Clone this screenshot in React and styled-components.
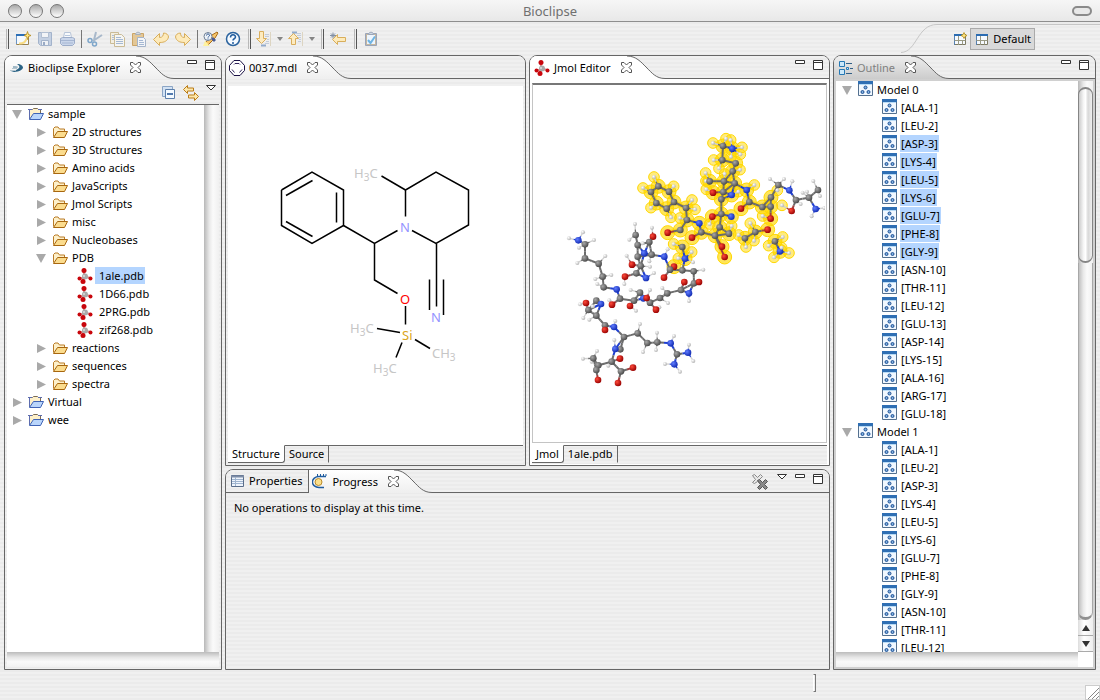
import React from "react";
import styled, { createGlobalStyle } from "styled-components";

const LINE = "#666";
const stripes =
  "repeating-linear-gradient(to bottom, #f0f0f0 0, #f0f0f0 2px, #ebebeb 2px, #ebebeb 4px)";

const Global = createGlobalStyle`
  *, *::before, *::after { box-sizing: border-box; }
  body { margin: 0; background: #ececec; }
  body, button { font-family: "Noto Sans", "Open Sans", sans-serif; font-size: 11px; line-height: 16px; color: #000; }
  button { margin: 0; padding: 0; border: 0; background: none; text-align: left; white-space: nowrap; }
  ul { list-style: none; margin: 0; padding: 0; }
  svg { display: block; flex: none; }
`;

const Window = styled.div`
  display: flex;
  flex-direction: column;
  height: 100vh;
  min-height: 480px;
  background: ${stripes};
`;

const TitleBar = styled.header`
  display: grid;
  grid-template-columns: 1fr auto 1fr;
  align-items: center;
  flex: none;
  height: 22px;
  padding: 0 8px;
  border-bottom: 1px solid #8e8e8e;
  background: linear-gradient(#f6f6f6, #e8e8e8);
`;

const Title = styled.h1`
  margin: 0;
  font-size: 13px;
  line-height: 20px;
  font-weight: 400;
  color: #707070;
`;

const Lights = styled.div`
  display: flex;
  gap: 7px;
`;

const Light = styled.button`
  width: 14px;
  height: 14px;
  border: 1px solid #777;
  border-radius: 7px;
  background: linear-gradient(#a8a8a8, #d0d0d0 45%, #fff);
`;

const Pill = styled.button`
  justify-self: end;
  width: 20px;
  height: 10px;
  border: 2px solid #8a8a8a;
  border-radius: 5px;
  background: #e8e8e8;
`;

const ToolRow = styled.div`
  display: flex;
  align-items: center;
  flex: none;
  height: 33px;
  padding-left: 6px;
`;

const ToolGroup = styled.div`
  display: flex;
  align-items: center;
  gap: ${(p) => p.$gap || 6}px;
  height: 33px;
  margin-right: ${(p) => p.$end || 8}px;
`;

const Handle = styled.span`
  width: 3px;
  height: 20px;
  border-left: 1px solid #b8b8b8;
  border-right: 1px solid #555;
`;

const Divider = styled.span`
  width: 1px;
  height: 18px;
  margin: 0 -1px 0 0;
  background: #777;
`;

const IconButton = styled.button`
  display: flex;
  align-items: center;
  justify-content: center;
  flex: none;
  width: ${(p) => p.$w || 16}px;
  height: ${(p) => p.$h || 16}px;
`;

const Perspectives = styled.div`
  display: flex;
  align-items: center;
  align-self: stretch;
  margin-left: auto;
`;

const PerspectiveBar = styled.div`
  display: flex;
  align-items: center;
  gap: 3px;
  height: 29px;
  padding: 0 65px 0 16px;
  border-top: 1px solid #c6c6c6;
`;

const DefaultButton = styled.button`
  display: flex;
  align-items: center;
  gap: 4px;
  height: 22px;
  padding: 0 3px 0 4px;
  border: 1px solid #aaa;
  background: #d9d9d9;
`;

const Workbench = styled.main`
  display: grid;
  grid-template-columns: 218px minmax(0, 1fr) 263px;
  gap: 3px;
  flex: 1;
  min-height: 0;
  padding: 0 4px;
`;

const Center = styled.div`
  display: grid;
  grid-template-rows: minmax(0, 411fr) minmax(0, 201fr);
  gap: 3px;
  min-height: 0;
`;

const Editors = styled.div`
  display: grid;
  grid-template-columns: minmax(0, 1fr) minmax(0, 1fr);
  gap: 3px;
  min-height: 0;
`;

const Panel = styled.section`
  display: flex;
  flex-direction: column;
  min-width: 0;
  min-height: 0;
  border: 1px solid ${LINE};
  border-radius: 8px 8px 0 0;
  overflow: hidden;
  background: ${(p) => p.$frame || stripes};
`;

const Header = styled.div`
  display: flex;
  flex: none;
  height: 23px;
  background: ${stripes};
`;

const Tab = styled.button`
  display: flex;
  align-items: center;
  gap: 4px;
  height: 23px;
  padding-left: ${(p) => p.$left || 3}px;
  color: ${(p) => p.$color || "#000"};
  background: ${(p) => p.$bg || "transparent"};
`;

const IdleTab = styled(Tab)`
  padding-right: 6px;
  border-bottom: 1px solid ${LINE};
  border-right: 1px solid ${LINE};
`;

const CloseButton = styled.button`
  display: flex;
  align-items: center;
  justify-content: flex-end;
  position: relative;
  z-index: 1;
  width: 21px;
  height: 23px;
  margin-right: -5px;
  background: none;
`;

const CloseArea = styled.div`
  display: flex;
  background: ${(p) => p.$bg};
`;

const HeaderTools = styled.div`
  display: flex;
  flex: 1;
  align-items: flex-start;
  justify-content: flex-end;
  gap: 8px;
  padding: 4px 6px 0 0;
  border-bottom: 1px solid ${LINE};
`;

const ViewBar = styled.div`
  display: flex;
  align-items: flex-start;
  justify-content: flex-end;
  gap: 7px;
  flex: none;
  height: 26px;
  margin: 0 2px;
  padding: 6px 3px 0;
  border-bottom: 1px solid ${LINE};
`;

const ScrollFrame = styled.div`
  display: grid;
  grid-template-columns: minmax(0, 1fr) 15px;
  grid-template-rows: minmax(0, 1fr) 15px;
  flex: 1;
  min-height: 0;
  margin: ${(p) => p.$margin};
  background: #fff;
`;

const Tree = styled.ul`
  overflow: hidden;
  background: #fff;
`;

const Row = styled.li`
  display: flex;
  align-items: ${(p) => (p.$top ? "flex-start" : "center")};
  gap: 4px;
  height: 18px;
  padding-left: ${(p) => p.$indent}px;
`;

const Toggle = styled.button`
  display: flex;
  align-self: center;
  justify-content: center;
  width: 10px;
  margin-right: 2px;
`;

const ItemText = styled.span`
  align-self: flex-start;
  height: 17px;
  padding-right: 1px;
  line-height: 17px;
  white-space: nowrap;
  background: ${(p) => (p.$selected ? "#b4d5ff" : "transparent")};
`;

const FileText = styled(ItemText)`
  margin-left: -2px;
  padding-left: 4px;
`;

const ResidueText = styled(ItemText)`
  margin-left: -1px;
  padding-left: 1px;
`;

const VTrack = styled.div`
  display: flex;
  flex-direction: column;
  background: linear-gradient(to right, #b8b8b8, #e8e8e8 35%, #fafafa 60%, #f0f0f0);
`;

const HTrack = styled.div`
  background: linear-gradient(to bottom, #bcbcbc, #e6e6e6 35%, #fafafa 65%, #f2f2f2);
`;

const VThumb = styled.div`
  flex: none;
  height: 176px;
  margin-top: 6px;
  border: 2px solid #858585;
  border-width: 2px 1px;
  border-radius: 8px;
  background: linear-gradient(to right, #ccc, #f6f6f6 35%, #fff 50%, #d8d8d8 70%, #f0f0f0);
`;

const VRail = styled.div`
  flex: 1;
  border: 1px solid #a8a8a8;
  border-top: 0;
  border-bottom: 3px solid #909090;
  border-radius: 0 0 8px 8px;
`;

const Stepper = styled.button`
  display: flex;
  align-items: center;
  justify-content: center;
  height: 16px;
  border-bottom: 1px solid #aaa;
  background: linear-gradient(to right, #ddd, #fff 40%, #eee);
`;

const Page = styled.div`
  flex: 1;
  min-height: 0;
  margin: ${(p) => p.$margin};
  overflow: hidden;
  background: #fff;
  border: ${(p) => (p.$sunken ? "1px solid #c4c4c4" : "0")};
  border-top: ${(p) => (p.$sunken ? "2px solid #777" : "0")};
`;

const PageTabs = styled.div`
  display: flex;
  flex: none;
  height: 19px;
  margin: 0 2px 1px;
  background: ${stripes};
`;

const PageTab = styled.button`
  height: 18px;
  padding: 0 4px;
  border-right: 1px solid ${LINE};
  border-top: 1px solid ${(p) => (p.$active ? "#fff" : LINE)};
  border-bottom: 1px solid ${(p) => (p.$active ? LINE : "transparent")};
  border-bottom-right-radius: ${(p) => (p.$active ? 3 : 0)}px;
  background: ${(p) => (p.$active ? "#fff" : "transparent")};
`;

const PageTabRest = styled.span`
  flex: 1;
  border-top: 1px solid ${LINE};
`;

const Message = styled.p`
  margin: 0;
  padding: 7px 8px;
`;

const StatusBar = styled.footer`
  display: flex;
  align-items: flex-start;
  justify-content: flex-end;
  flex: none;
  height: 30px;
  padding-top: 4px;
`;

const StatusHandle = styled.span`
  width: 3px;
  height: 18px;
  margin-right: 269px;
  border: 1px solid #777;
  border-left-color: #fff;
`;

const Grip = styled.span`
  align-self: flex-end;
  width: 15px;
  height: 15px;
  border: 1px solid #ccc;
  background: #fff;
`;

/* ---------- icons ---------- */

const Svg = ({ w = 16, h = 16, children, ...rest }) => (
  <svg width={w} height={h} viewBox={`0 0 ${w} ${h}`} fill="none" aria-hidden="true" {...rest}>
    {children}
  </svg>
);

const CloseIcon = () => (
  <Svg w={11} h={11}>
    <path
      d="M.5.5h2.500l2.500 2.500 2.500-2.500h2.500v2.500l-2.500 2.500 2.500 2.500v2.500h-2.500l-2.500-2.500-2.500 2.500h-2.500v-2.500l2.500-2.500-2.500-2.500z"
      fill="#fff"
      stroke="#555"
    />
  </Svg>
);
const MinIcon = () => (
  <Svg w={10} h={4}>
    <path d="M.5.5h9v3h-9z" fill="#fff" stroke="#333" />
  </Svg>
);
const MaxIcon = () => (
  <Svg w={10} h={10}>
    <path d="M.5.5h9v9h-9z" fill="#fff" stroke="#333" />
    <path d="M.5 2.500h9" stroke="#333" />
  </Svg>
);
const MenuIcon = () => (
  <Svg w={10} h={6}>
    <path d="M.5.5h9L5 5z" fill="#fff" stroke="#333" />
  </Svg>
);
const TriRight = () => (
  <Svg w={10} h={10}>
    <path d="M1 1l9 4.500-9 4.500z" fill="#a9a9a9" />
  </Svg>
);
const TriDown = () => (
  <Svg w={10} h={10}>
    <path d="M0 1h10L5 10z" fill="#a9a9a9" />
  </Svg>
);
const Caret = () => (
  <Svg w={6} h={4}>
    <path d="M0 0h6L3 4z" fill="#858585" />
  </Svg>
);

const Folder = ({ project }) => (
  <Svg>
    <path
      d={project ? "M1.500 12.500v-9h3l1-1h4l1 1h2v4" : "M1.500 12.500v-8l1.500-1.500h3l1.500 2h5v2.500"}
      fill="#fdf0ca"
      stroke={project ? "#7c6c54" : "#b97b26"}
    />
    {project && <path d="M0 3.500h4M10 3.500h4M1.500 4v9" stroke="#5d6cae" />}
    <path
      d="M1.500 13.500l4-6h10l-3 6z"
      fill={project ? "#b9d5fb" : "#fbdc8e"}
      stroke={project ? "#3f63b5" : "#a8670f"}
    />
  </Svg>
);

const Molecule = () => (
  <Svg>
    <path d="M7 3v6M8 9l6 1M8 9l-6 2M7 9l-1 5" stroke="#d88" strokeWidth="2" />
    <circle cx="8" cy="8.500" r="3" fill="#aaa" />
    <circle cx="7" cy="8" r="1" fill="#ddd" />
    <g fill="#c8060c">
      <circle cx="7" cy="2.500" r="2.500" />
      <circle cx="2.500" cy="10.500" r="2" />
      <circle cx="13.500" cy="10.500" r="2" />
      <circle cx="6" cy="13.500" r="2.500" />
    </g>
  </Svg>
);

const ModelIcon = () => (
  <Svg w={15} h={15}>
    <path d="M.5.5h14v14H.5z" fill="#f1f8ff" stroke="#54708f" />
    <path d="M0 1.500h15" stroke="#2f6fb4" strokeWidth="3" />
    <path d="M1 3.500h13" stroke="#b9dcf7" />
    <g fill="#7fb0e0" stroke="#1d4f93">
      <circle cx="7.500" cy="6.500" r="1.500" />
      <circle cx="4.500" cy="11" r="1.500" />
      <circle cx="10.500" cy="11" r="1.500" />
    </g>
  </Svg>
);

const NewIcon = () => (
  <Svg>
    <path d="M1.500 3.500h12v10h-12z" fill="#f5faff" stroke="#9a8350" />
    <path d="M1 4h9" stroke="#2c6fb7" strokeWidth="2" />
    <path d="M1.500 5v8" stroke="#6a94c4" />
    <path d="M4 12.500c5 0 7-2 7.500-5" stroke="#f8dc84" strokeWidth="2" />
    <path d="M12.500.5l1 3 2.500 1-2.500 1-1 3-1-3-2.500-1 2.500-1z" fill="#ffe680" stroke="#b48a1a" strokeWidth=".8" />
  </Svg>
);
const SaveIcon = () => (
  <Svg>
    <path d="M1.500 1.500h13v13h-11l-2-2z" fill="#c4d0e2" stroke="#a3b3cb" />
    <path d="M4.500 1.500h7v5h-7z" fill="#f2f4f7" stroke="#b2bfd2" />
    <path d="M4.500 9.500h7v5h-7z" fill="#eef1f5" stroke="#a3b3cb" />
    <path d="M6 11h2v3H6z" fill="#9aabc5" />
  </Svg>
);
const PrintIcon = () => (
  <Svg>
    <path d="M4.500 7l1-5.500h6l1 5.500" fill="#f8fafc" stroke="#b7c4d8" />
    <path d="M6 4.500h5" stroke="#b9c8de" />
    <path d="M1.500 7.500l2-1h10l2 1v5l-2 2h-10l-2-2z" fill="#cad6ea" stroke="#9dadc9" />
    <path d="M2 9.500h13M3 12h11" stroke="#a6b6d2" />
  </Svg>
);
const CutIcon = () => (
  <Svg>
    <path d="M9 1L7 9M15 4L6 10" stroke="#a8b8ca" strokeWidth="2" />
    <circle cx="3" cy="9.500" r="2" stroke="#7ea6ca" strokeWidth="1.500" />
    <circle cx="7.500" cy="13" r="2" stroke="#7ea6ca" strokeWidth="1.500" />
  </Svg>
);
const CopyIcon = () => (
  <Svg>
    <path d="M1.500 1.500h8v11h-8z" fill="#f3eee0" stroke="#cabb96" />
    <path d="M3 4.500h5M3 6.500h5M3 8.500h5" stroke="#afc0d8" />
    <path d="M5.500 3.500h7l3 3v9h-10z" fill="#f5f5f2" stroke="#cabb96" />
    <path d="M7 6.500h5M7 8.500h7M7 10.500h7M7 12.500h7" stroke="#a5b8d3" />
  </Svg>
);
const PasteIcon = () => (
  <Svg>
    <path d="M1.500 2.500h11v12h-11z" fill="#e3c796" stroke="#cba567" />
    <path d="M4.500 3.500c0-3 5-3 5 0z" fill="#d8dce2" stroke="#a5afbb" />
    <path d="M6.500 6.500h6l2 2v7h-8z" fill="#f3f5f8" stroke="#a5b4ca" />
    <path d="M8 9.500h4M8 11.500h5M8 13.500h5" stroke="#a5b8d3" />
  </Svg>
);
const UndoIcon = ({ flip }) => (
  <Svg>
    <path
      transform={flip ? "translate(16 0) scale(-1 1)" : undefined}
      d="M.5 8.500l6-6v4c3 0 4-2 4-4.500 3 0 5 2 5 4-1 4-4 5.500-9 5.500v3z"
      fill="#fdeaba"
      stroke="#d8ae5b"
    />
  </Svg>
);
const SearchIcon = () => (
  <Svg>
    <path d="M4 15l8-8 3-5-1-1-5 3-7 8z" fill="#f8c66a" stroke="#a86c18" />
    <path d="M8 8l3 3 2-2-3-3z" fill="#4a5c96" />
    <circle cx="5" cy="5.500" r="4" fill="#eef3f8" stroke="#6c7c92" />
    <path d="M3.500 4.500c0-2 3-2 3 0 0 1-1.500 1-1.500 2M5 7.500v1" stroke="#28518f" />
    <path d="M0 15l2-5 5 5z" fill="#fff3a0" />
  </Svg>
);
const HelpIcon = () => (
  <Svg>
    <circle cx="8" cy="8" r="6.500" fill="#f5faff" stroke="#2b639e" strokeWidth="1.500" />
    <path d="M5.500 6.500c0-3.500 5-3.500 5-.5 0 2-2.500 1.500-2.500 3.500M8 11v2" stroke="#205c9e" strokeWidth="1.500" />
  </Svg>
);
const StepIcon = ({ up }) => (
  <Svg>
    <path
      d={up ? "M5 2.500h2M9 2.500h4M9 4.500h4M9 6.500h4M11 8.500h2M10 10.500h3" : "M9 3.500h4M9 5.500h4M11 8.500h2M10 10.500h3M9 12.500h4"}
      stroke="#c3ccda"
    />
    <path d="M14.500 1v14" stroke="#ddd5c2" />
    <path d={up ? "M4 1.500h5" : "M5 14.500h5"} stroke="#93abcb" strokeWidth="2" />
    <path
      d={up ? "M5.500 2.500l5 5h-3v6h-4v-6h-3z" : "M3.500.5h4v7h3l-5 5-5-5h3z"}
      fill="#fdebc0"
      stroke="#d9ae5d"
    />
  </Svg>
);
const BackIcon = () => (
  <Svg>
    <path d="M0 4.500h6M3 1.500v6M1 2.500l4 4M5 2.500l-4 4" stroke="#8290a4" />
    <path d="M2.500 8.500l5-5v3h8v4h-8v3z" fill="#fdeaba" stroke="#d8ae5b" />
  </Svg>
);
const TaskIcon = () => (
  <Svg>
    <path d="M2.500 2.500h11v12h-11z" fill="#c5b7a0" stroke="#9aa5b9" />
    <path d="M4 4h8v9H4z" fill="#edf5fd" />
    <path d="M5.500 3.500c0-3 5-3 5 0z" fill="#cfd8e3" stroke="#9aa5b9" />
    <path d="M5 9l2.500 3L12 5.500" stroke="#6fb4e3" strokeWidth="2" />
  </Svg>
);
const LayoutIcon = ({ star }) => (
  <Svg w={14} h={14}>
    <path d="M1.500 2.500h11v10h-11z" fill="#f6faff" stroke="#7d7a62" />
    <path d="M1 3h12" stroke="#2b6cb2" strokeWidth="2" />
    <path d="M1.500 4v9" stroke="#5580b0" />
    <path d="M5.500 4v9M5.500 8.500h7M9.500 8.500v4M1.500 8.500h4" stroke="#9a9a84" />
    {star && (
      <path d="M11 .5l1 2 2 1-2 1-1 2-1-2-2-1 2-1z" fill="#ffe680" stroke="#b48a1a" strokeWidth=".8" />
    )}
  </Svg>
);
const BioclipseIcon = () => (
  <Svg w={14}>
    <path d="M1 12c4 0 10 0 12-4 0-2-2-4-6-4 2 1 3 3 2 4-2 2-5 3-8 4z" fill="#2b6385" />
    <path d="M3 6c3 0 5 0 5 1s-2 1.500-5 1.500z" fill="#9fb8c6" />
    <path d="M0 10.500h6M2 8.500h5" stroke="#b4c5cf" />
  </Svg>
);
const RingIcon = () => (
  <Svg>
    <path d="M5 .5h6l4.500 5v5l-4.500 5H5l-4.500-5v-5z" fill="#fff" stroke="#1b1145" />
    <path d="M5 4.500l1-1h4l1 1M3 9.500l2.500 3M13 9.500l-2.500 3" stroke="#30235c" />
  </Svg>
);
const OutlineIcon = () => (
  <Svg w={14}>
    <g fill="#cbe8fa" stroke="#2578b5">
      <path d="M.5 1.500h5v5h-5zM.5 9.500h5v5h-5z" />
      <path d="M7.500 7.500h2v2h-2z" />
    </g>
    <path d="M7 3.500h6M11 8.500h3M7 13.500h6" stroke="#315f86" />
  </Svg>
);
const TableIcon = () => (
  <Svg w={14} h={14}>
    <path d="M.5 1.500h12v11H.5z" fill="#eef4fc" stroke="#5a6d8a" />
    <path d="M0 2.500h13" stroke="#7c8ca6" strokeWidth="2" />
    <path d="M1 5.500h11M1 7.500h11M1 9.500h11M4.500 3v9" stroke="#9fb4cf" />
  </Svg>
);
const ProgressIcon = () => (
  <Svg>
    <path d="M14 2.500H7a6 5 0 0 0 0 11h5" stroke="#1f5c9f" strokeWidth="1.500" />
    <path d="M5.500 0v2M8.500 0v2M11.500 0v2M14 0v2" stroke="#1f5c9f" />
    <circle cx="6.500" cy="8" r="3.500" fill="#fbe08c" stroke="#b98b2a" />
  </Svg>
);
const CollapseIcon = () => (
  <Svg w={14} h={14}>
    <path d="M.5.5h10v10H.5z" fill="#d3e2f3" stroke="#8ba5c5" />
    <path d="M3.500 3.500h9v9h-9z" fill="#f4faff" stroke="#5c7fab" />
    <path d="M5 8h6" stroke="#1d4f93" strokeWidth="1.500" />
  </Svg>
);
const LinkIcon = () => (
  <Svg>
    <path d="M.5 4.500l4-4v2.500h6v3h-6v2.500z" fill="#fde8ad" stroke="#bb7d18" />
    <path d="M15.500 11.500l-4-4v2.500h-6v3h6v2.500z" fill="#fde8ad" stroke="#bb7d18" />
  </Svg>
);
const RemoveAllIcon = () => (
  <Svg w={17}>
    <path d="M.5 1.500l2-1 3 3 3-3 2 2-3 3 3 3-2 1-3-2-3 2-2-1 3-3z" fill="#e8e8e8" stroke="#888" />
    <path d="M5.500 6.500l2-1 3 3 3-3 2 2-3 3 3 3-2 2-3-3-3 3-2-2 3-3z" fill="#888" stroke="#555" />
  </Svg>
);

/* ---------- drawings ---------- */

const BONDS_2D = [
  "281.500,190 312,172 343.500,190 343.500,225.500 312,243.500 281.500,225.500 281.500,190",
  "286,195.500 312.500,180.500",
  "336.500,192.500 336.500,222.500",
  "286,221.500 312.500,236.500",
  "343.500,225.500 374.500,243.500 397.500,230.500",
  "374.500,243.500 374.500,280 397.500,293.500",
  "405.500,216.500 405.500,190 436,172 468.500,190 468.500,225 436,243.500 412,230.500",
  "381.500,176 405.500,190",
  "405.500,306 405.500,324.500",
  "436.500,243.500 436.500,306.500",
  "429.500,279.500 429.500,310",
  "443.500,279.500 443.500,315",
  "377,328.500 400,332.500",
  "415,339.500 430,348.500",
  "402,342.500 396,357.500",
];

const Label2D = ({ x, y, color = "#c6c6c6", children }) => (
  <text x={x} y={y} fill={color} fontSize="13">
    {children}
  </text>
);
const Sub = ({ children }) => (
  <tspan fontSize="10" dy="3">
    {children}
  </tspan>
);
const Up = ({ children }) => <tspan dy="-3">{children}</tspan>;

const Structure2D = () => (
  <svg width="295" height="340" viewBox="228 86 295 340" role="img" aria-label="2D structure">
    <g fill="none" stroke="#000" strokeWidth="1.500">
      {BONDS_2D.map((points) => (
        <polyline key={points} points={points} />
      ))}
    </g>
    <Label2D x={354} y={178}>H<Sub>3</Sub><Up>C</Up></Label2D>
    <Label2D x={350} y={333}>H<Sub>3</Sub><Up>C</Up></Label2D>
    <Label2D x={373} y={373}>H<Sub>3</Sub><Up>C</Up></Label2D>
    <Label2D x={432} y={358}>CH<Sub>3</Sub></Label2D>
    <Label2D x={400} y={232} color="#9494ff">N</Label2D>
    <Label2D x={431} y={322} color="#9494ff">N</Label2D>
    <Label2D x={400} y={304} color="#f00">O</Label2D>
    <Label2D x={402} y={340} color="#daa520">Si</Label2D>
  </svg>
);

const parse = (text, selected) =>
  text
    .trim()
    .split(/\s+/)
    .map((entry) => {
      const [x, y] = entry.slice(1).split(",").map(Number);
      return { kind: entry[0], x, y, selected };
    });

const ATOMS = [
  ...parse(
    `C489,78 N517,86 H459,69 H512,60 H546,82 H498,56 C487,120 H461,120 C527,130 H513,110 H541,103 H477,145
     H540,149 C518,154 H437,159 H438,183 C449,184 C492,184 H494,162 O459,218 C490,216 N515,225 N560,210 H583,195
     H439,208 H535,215 C484,238 O543,266 C568,246 C607,261 C632,260 H666,256 H608,288 C633,232 H652,211 C524,190
     C484,282 O457,290 N514,290 H449,312 C479,322 C507,341 H515,318 O486,380 O494,411 C465,347 C424,337
     N418,310 C381,300 H360,294 O323,338 C361,330 O396,353 C378,264 H396,240 H405,268 C342,246 C327,215
     H341,199 C295,199 H282,171 C273,216 H249,204 C289,249 H273,263 C320,266 H333,292 C367,381 H341,372
     H395,396 N375,416 H355,415 O342,440 O632,296 O623,329 C586,336 C555,355 H571,310 H558,381 H536,345
     H582,362 C645,364 H668,351 H626,377 N660,394 H642,412 H687,399 H665,383`,
    true
  ),
  ...parse(
    `N55,361 H27,355 H69,337 H57,383 C75,373 H102,360 C75,415 H52,429 C116,431 H136,408 C128,470 H154,465
     H106,477 C131,502 H112,492 C109,542 O78,549 N123,552 H148,541 N170,508 H193,492 C180,536 O156,554
     C222,542 O210,558 C85,570 H60,553 H70,594 H98,559 C109,587 H88,599 C135,616 O135,630 N162,621 H166,603
     C192,651 C233,640 H240,612 C262,669 H249,696 C292,667 H291,638 H288,690 N332,670 H342,648 C351,703
     N384,698 H387,674 H400,723 N343,733 H315,732 H360,755 C181,688 O180,716 N166,687 H163,660 C155,725
     H145,737 C115,736 C109,750 H95,725 C100,715 H69,716 H111,693 O114,780 C183,754 O219,743 O174,789
     H225,312 C227,345 H208,359 O279,350 H276,323 C268,366 C233,375 N253,400 H200,407 C233,410 O216,434
     C275,404 H268,424 N313,410 H323,388 C242,438 H270,440 C229,460 O195,470 N258,474 H282,459 C330,449
     O312,473 C367,451 C401,454 H399,427 H430,449 C402,490 O417,486 O373,486 N387,520 H387,543 C363,510
     C322,520 H307,504 H324,549 C300,534 H298,562 N250,535 C240,518 H212,510 H270,510 C270,548 O260,534
     O288,569 H228,572 H248,370 C655,195 H630,177 H672,177 N688,211 H697,184 C708,240 O695,273 H722,252
     C747,233 H728,218 H741,215 C774,210 H760,183 H780,228 N767,267 H793,264 H755,289`,
    false
  ),
];

const distance = (a, b) => Math.hypot(a.x - b.x, a.y - b.y);
const nearest = (a, candidates) =>
  candidates.reduce((best, b) => (distance(a, b) < distance(a, best) ? b : best));

const HEAVY = ATOMS.filter((a) => a.kind !== "H");
const CARBONS = ATOMS.filter((a) => a.kind === "C");

/* Hydrogens and oxygens hang on one neighbour; carbon and nitrogen link by distance. */
const BONDS_3D = ATOMS.flatMap((a, i) => {
  if (a.kind === "H") return [{ a, b: nearest(a, HEAVY) }];
  if (a.kind === "O") return [{ a, b: nearest(a, CARBONS) }];
  return ATOMS.slice(i + 1)
    .filter(
      (b) =>
        (b.kind === "C" || b.kind === "N") &&
        (a.kind === "C" || b.kind === "C") &&
        distance(a, b) < 45
    )
    .map((b) => ({ a, b }));
});

const BALL = { C: "url(#ballC)", N: "url(#ballN)", O: "url(#ballO)", H: "url(#ballH)" };
const STICK = { C: "#6c6c6c", N: "#1f3fd0", O: "#a04040", H: "#d0d0d0" };

const Protein3D = () => (
  <svg width="292" height="350" viewBox="533 85 292 350" role="img" aria-label="1ale.pdb model">
    <defs>
      {[
        ["C", "#a8a8a8", "#484848"],
        ["N", "#5f7cff", "#1029b0"],
        ["O", "#ff4a3a", "#960000"],
        ["H", "#ffffff", "#b0b0b0"],
      ].map(([kind, light, dark]) => (
        <radialGradient key={kind} id={`ball${kind}`} cx=".35" cy=".35" r=".7">
          <stop offset="0" stopColor={light} />
          <stop offset="1" stopColor={dark} />
        </radialGradient>
      ))}
    </defs>
    <g transform="translate(560 120) scale(.3333)">
      {BONDS_3D.filter(({ a, b }) => a.selected && b.selected).map(({ a, b }, i) => (
        <line key={i} x1={a.x} y1={a.y} x2={b.x} y2={b.y} stroke="#ffd700" strokeOpacity=".7" strokeWidth="14" />
      ))}
      {ATOMS.filter((a) => a.selected).map((a, i) => (
        <circle
          key={i}
          cx={a.x}
          cy={a.y}
          r={a.kind === "H" ? 16 : 21}
          fill="#ffd700"
          fillOpacity={a.kind === "H" ? 0.5 : 0.65}
          stroke="#ffd700"
          strokeWidth="3"
        />
      ))}
      {BONDS_3D.map(({ a, b }, i) => {
        const mx = (a.x + b.x) / 2;
        const my = (a.y + b.y) / 2;
        return (
          <g key={i} strokeWidth={a.kind === "H" ? 4 : 6}>
            <line x1={a.x} y1={a.y} x2={mx} y2={my} stroke={STICK[a.kind]} />
            <line x1={mx} y1={my} x2={b.x} y2={b.y} stroke={STICK[b.kind]} />
          </g>
        );
      })}
      {ATOMS.map((a, i) => (
        <circle key={i} cx={a.x} cy={a.y} r={a.kind === "H" ? 6 : 10} fill={BALL[a.kind]} />
      ))}
    </g>
  </svg>
);

/* ---------- parts ---------- */

const Tool = ({ label, children, w, h }) => (
  <IconButton type="button" aria-label={label} $w={w} $h={h}>
    {children}
  </IconButton>
);

const WindowTools = () => (
  <>
    <Tool label="Minimize" w={10} h={4}><MinIcon /></Tool>
    <Tool label="Maximize" w={10} h={10}><MaxIcon /></Tool>
  </>
);

const fills = {
  view: ["#ffffff", "#efefef"],
  editor: ["#ffffff", "#ffffff"],
  active: ["#eeeeee", "#cccccc"],
};

const ActiveTab = ({ id, icon, label, tone = "view", color, left }) => {
  const [from, to] = fills[tone];
  const bg = `linear-gradient(${from}, ${to})`;
  return (
    <>
      <Tab type="button" $bg={bg} $color={color} $left={left}>
        {icon}
        {label}
      </Tab>
      <CloseArea $bg={bg}>
        <CloseButton type="button" aria-label={`Close ${label}`}>
          <CloseIcon />
        </CloseButton>
      </CloseArea>
      <svg width="38" height="23" viewBox="0 0 38 23" aria-hidden="true">
        <defs>
          <linearGradient id={id} x1="0" y1="0" x2="0" y2="1">
            <stop offset="0" stopColor={from} />
            <stop offset="1" stopColor={to} />
          </linearGradient>
        </defs>
        <path d="M0 0C9 0 14 6 19 11C25 17 29 22.500 38 22.500V23H0z" fill={`url(#${id})`} />
        <path d="M0 0C9 0 14 6 19 11C25 17 29 22.500 38 22.500" fill="none" stroke={LINE} />
      </svg>
    </>
  );
};

const EXPLORER = [
  [0, "sample", true],
  [1, "2D structures"],
  [1, "3D Structures"],
  [1, "Amino acids"],
  [1, "JavaScripts"],
  [1, "Jmol Scripts"],
  [1, "misc"],
  [1, "Nucleobases"],
  [1, "PDB", true],
  [2, "1ale.pdb"],
  [2, "1D66.pdb"],
  [2, "2PRG.pdb"],
  [2, "zif268.pdb"],
  [1, "reactions"],
  [1, "sequences"],
  [1, "spectra"],
  [0, "Virtual"],
  [0, "wee"],
];

const ExplorerRow = ({ level, name, open }) =>
  level === 2 ? (
    <Row $indent={70}>
      <Molecule />
      <FileText $selected={name === "1ale.pdb"}>{name}</FileText>
    </Row>
  ) : (
    <Row $indent={5 + level * 24}>
      <Toggle type="button" aria-label={`Toggle ${name}`}>{open ? <TriDown /> : <TriRight />}</Toggle>
      <Folder project={level === 0} />
      <ItemText>{name}</ItemText>
    </Row>
  );

const RESIDUES = [
  "ALA-1", "LEU-2", "ASP-3", "LYS-4", "LEU-5", "LYS-6", "GLU-7", "PHE-8", "GLY-9",
  "ASN-10", "THR-11", "LEU-12", "GLU-13", "ASP-14", "LYS-15", "ALA-16", "ARG-17", "GLU-18",
];

const Model = ({ index, residues, from, to }) => (
  <>
    <Row $indent={6} $top>
      <Toggle type="button" aria-label={`Toggle Model ${index}`}><TriDown /></Toggle>
      <ModelIcon />
      <ItemText>Model {index}</ItemText>
    </Row>
    {residues.map((name, i) => (
      <Row key={name} $indent={46} $top>
        <ModelIcon />
        <ResidueText $selected={i >= from && i <= to}>[{name}]</ResidueText>
      </Row>
    ))}
  </>
);

export default function App() {
  return (
    <>
      <Global />
      <Window>
        <TitleBar>
          <Lights>
            <Light type="button" aria-label="Close window" />
            <Light type="button" aria-label="Minimize window" />
            <Light type="button" aria-label="Zoom window" />
          </Lights>
          <Title>Bioclipse</Title>
          <Pill type="button" aria-label="Toggle toolbar" />
        </TitleBar>

        <ToolRow>
          <ToolGroup $end={7}>
            <Handle />
            <Tool label="New"><NewIcon /></Tool>
            <Tool label="Save"><SaveIcon /></Tool>
            <Tool label="Print"><PrintIcon /></Tool>
            <Divider />
            <Tool label="Cut"><CutIcon /></Tool>
            <Tool label="Copy"><CopyIcon /></Tool>
            <Tool label="Paste"><PasteIcon /></Tool>
            <Tool label="Undo"><UndoIcon /></Tool>
            <Tool label="Redo"><UndoIcon flip /></Tool>
            <Divider />
            <Tool label="Search"><SearchIcon /></Tool>
            <Tool label="Help"><HelpIcon /></Tool>
          </ToolGroup>
          <ToolGroup $gap={5} $end={6}>
            <Handle />
            <Tool label="Next annotation"><StepIcon /></Tool>
            <Tool label="Next annotation menu" w={6} h={4}><Caret /></Tool>
            <Tool label="Previous annotation"><StepIcon up /></Tool>
            <Tool label="Previous annotation menu" w={6} h={4}><Caret /></Tool>
          </ToolGroup>
          <ToolGroup>
            <Handle />
            <Tool label="Last edit location"><BackIcon /></Tool>
          </ToolGroup>
          <ToolGroup>
            <Handle />
            <Tool label="Task"><TaskIcon /></Tool>
          </ToolGroup>
          <Perspectives>
            <svg width="36" height="33" viewBox="0 0 36 33" aria-hidden="true">
              <path d="M0 30.500C16 30 16 2.500 36 2.500" fill="none" stroke="#c6c6c6" />
            </svg>
            <PerspectiveBar>
              <Tool label="Open perspective" w={14} h={14}><LayoutIcon star /></Tool>
              <DefaultButton type="button">
                <LayoutIcon />
                Default
              </DefaultButton>
            </PerspectiveBar>
          </Perspectives>
        </ToolRow>

        <Workbench>
          <Panel>
            <Header>
              <ActiveTab id="tabExplorer" icon={<BioclipseIcon />} label="Bioclipse Explorer" left={5} />
              <HeaderTools><WindowTools /></HeaderTools>
            </Header>
            <ViewBar>
              <Tool label="Collapse all" w={14}><CollapseIcon /></Tool>
              <Tool label="Link with editor"><LinkIcon /></Tool>
              <Tool label="View menu" w={10} h={6}><MenuIcon /></Tool>
            </ViewBar>
            <ScrollFrame $margin="0 2px 2px">
              <Tree>
                {EXPLORER.map(([level, name, open]) => (
                  <ExplorerRow key={name} level={level} name={name} open={open} />
                ))}
              </Tree>
              <VTrack />
              <HTrack />
              <HTrack />
            </ScrollFrame>
          </Panel>

          <Center>
            <Editors>
              <Panel>
                <Header>
                  <ActiveTab id="tabStructure" icon={<RingIcon />} label="0037.mdl" />
                  <HeaderTools />
                </Header>
                <Page $margin="7px 2px 0"><Structure2D /></Page>
                <PageTabs>
                  <PageTab type="button" $active>Structure</PageTab>
                  <PageTab type="button">Source</PageTab>
                  <PageTabRest />
                </PageTabs>
              </Panel>
              <Panel $frame="#fff">
                <Header>
                  <ActiveTab id="tabJmol" icon={<Molecule />} label="Jmol Editor" tone="editor" left={4} />
                  <HeaderTools><WindowTools /></HeaderTools>
                </Header>
                <Page $sunken $margin="4px 2px 2px"><Protein3D /></Page>
                <PageTabs>
                  <PageTab type="button" $active>Jmol</PageTab>
                  <PageTab type="button">1ale.pdb</PageTab>
                  <PageTabRest />
                </PageTabs>
              </Panel>
            </Editors>
            <Panel>
              <Header>
                <IdleTab type="button" $left={5}>
                  <TableIcon />
                  Properties
                </IdleTab>
                <ActiveTab id="tabProgress" icon={<ProgressIcon />} label="Progress" />
                <HeaderTools>
                  <Tool label="Remove all finished" w={17}><RemoveAllIcon /></Tool>
                  <Tool label="View menu" w={10} h={6}><MenuIcon /></Tool>
                  <WindowTools />
                </HeaderTools>
              </Header>
              <Message>No operations to display at this time.</Message>
            </Panel>
          </Center>

          <Panel $frame="#d0d0d0">
            <Header>
              <ActiveTab id="tabOutline" icon={<OutlineIcon />} label="Outline" tone="active" color="#808080" left={5} />
              <HeaderTools><WindowTools /></HeaderTools>
            </Header>
            <ScrollFrame $margin="2px 2px 2px">
              <Tree>
                <Model index={0} residues={RESIDUES} from={2} to={8} />
                <Model index={1} residues={RESIDUES.slice(0, 12)} from={99} to={0} />
              </Tree>
              <VTrack>
                <VThumb />
                <VRail />
                <Stepper type="button" aria-label="Scroll up">
                  <Svg w={8} h={6}><path d="M4 0l4 6H0z" fill="#333" /></Svg>
                </Stepper>
                <Stepper type="button" aria-label="Scroll down">
                  <Svg w={8} h={6}><path d="M0 0h8L4 6z" fill="#333" /></Svg>
                </Stepper>
              </VTrack>
              <HTrack />
            </ScrollFrame>
          </Panel>
        </Workbench>

        <StatusBar>
          <StatusHandle />
          <Grip>
            <Svg w={13} h={13}>
              <path d="M2 13L13 2M6 13l7-7M10 13l3-3" stroke="#888" />
            </Svg>
          </Grip>
        </StatusBar>
      </Window>
    </>
  );
}
